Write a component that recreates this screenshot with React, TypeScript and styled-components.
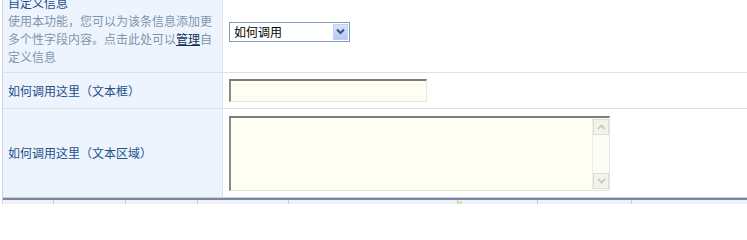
import React from 'react';
import styled, {createGlobalStyle} from "styled-components";

const GlobalStyle = createGlobalStyle`
    html, body {
        margin: 0;
        padding: 0;
        background: #ffffff;
        height: 204px;
        overflow: hidden;
    }
    body {
        font-family: "Noto Sans CJK SC", "Noto Sans", sans-serif;
        font-size: 12px;
    }
`

const footerCols = [50, 71, 71, 90, 168, 79, 93];

export default function App() {
    return (
        <>
            <GlobalStyle/>
            <Table>
                <Row height={86}>
                    <LabelCell>
                        <div>
                            <Title>自定义信息</Title>
                            <Desc>使用本功能，您可以为该条信息添加更多个性字段内容。点击此处可以<a href="#">管理</a>自定义信息</Desc>
                        </div>
                    </LabelCell>
                    <ValueCell>
                        <SelectBox>
                            <Select defaultValue="how">
                                <option value="how">如何调用</option>
                            </Select>
                            <ArrowButton>
                                <svg width="9" height="7" viewBox="0 0 9 7">
                                    <path d="M1 1.5 L4.5 5 L8 1.5" fill="none" stroke="#3d4f7a" strokeWidth="2"/>
                                </svg>
                            </ArrowButton>
                        </SelectBox>
                    </ValueCell>
                </Row>
                <Row height={36}>
                    <LabelCell>如何调用这里（文本框）</LabelCell>
                    <ValueCell>
                        <TextInput type="text"/>
                    </ValueCell>
                </Row>
                <Row height={89} last>
                    <LabelCell>如何调用这里（文本区域）</LabelCell>
                    <ValueCell>
                        <AreaBox>
                            <Area/>
                            <ScrollBar>
                                <ScrollBtn>
                                    <svg width="9" height="6" viewBox="0 0 9 6">
                                        <path d="M1 5 L4.5 1.5 L8 5" fill="none" stroke="#c4c4bc" strokeWidth="1.6"/>
                                    </svg>
                                </ScrollBtn>
                                <ScrollBtn>
                                    <svg width="9" height="6" viewBox="0 0 9 6">
                                        <path d="M1 1 L4.5 4.5 L8 1" fill="none" stroke="#c4c4bc" strokeWidth="1.6"/>
                                    </svg>
                                </ScrollBtn>
                            </ScrollBar>
                        </AreaBox>
                    </ValueCell>
                </Row>
                <Footer>
                    {footerCols.map((w, i) => (
                        <FooterCell key={i} style={{width: w}}>
                            {i === 5 && <Mark/>}
                        </FooterCell>
                    ))}
                    <FooterCell/>
                </Footer>
            </Table>
        </>
    );
}

const Table = styled.div`
    margin: -13px 0 0 2px;
    border-left: 1px solid #c9d5e4;
    display: flex;
    flex-direction: column;
`
const Row = styled.div<{height: number; last?: boolean}>`
    display: grid;
    grid-template-columns: 220px 1fr;
    height: ${p => p.height}px;
    box-sizing: border-box;
    border-bottom: 1px solid ${p => p.last ? "#c3d0e6" : "#dbe2ea"};
`
const LabelCell = styled.div`
    background: #eef4fd;
    border-right: 1px solid #d9e2ed;
    padding: 0 8px 0 5px;
    display: flex;
    align-items: center;
    color: #1d4f8a;
    line-height: 18px;
`
const Title = styled.div`
    color: #1d4f8a;
`
const Desc = styled.div`
    color: #8094ad;

    a {
        color: #13305a;
        text-decoration: underline;
    }
`
const ValueCell = styled.div`
    display: flex;
    align-items: center;
    padding-left: 6px;
    background: #ffffff;
`
const SelectBox = styled.div`
    display: flex;
    align-items: stretch;
    width: 121px;
    height: 20px;
    box-sizing: border-box;
    border: 1px solid #7f9db9;
    background: #ffffff;
    margin-top: 4px;
`
const Select = styled.select`
    appearance: none;
    flex: 1;
    min-width: 0;
    border: none;
    outline: none;
    background: transparent;
    padding: 0 0 0 4px;
    font-family: "Noto Sans CJK SC", sans-serif;
    font-size: 12px;
    color: #000000;
`
const ArrowButton = styled.span`
    width: 15px;
    margin: 1px;
    display: flex;
    align-items: center;
    justify-content: center;
    background: linear-gradient(#d6e1fb, #b6c8f3);
    border: 1px solid #c3d1f2;
    box-sizing: border-box;
`
const TextInput = styled.input`
    width: 198px;
    height: 23px;
    box-sizing: border-box;
    margin: 0;
    padding: 0 3px;
    background: #fefef3;
    border-style: solid;
    border-width: 2px 1px 1px 2px;
    border-color: #7c7c72 #e6e6dc #e6e6dc #8a8a80;
    outline: none;
`
const AreaBox = styled.div`
    display: flex;
    width: 381px;
    height: 75px;
    box-sizing: border-box;
    background: #fefef3;
    border-style: solid;
    border-width: 2px 1px 1px 2px;
    border-color: #7c7c72 #e6e6dc #e6e6dc #8a8a80;
    margin-top: 1px;
`
const Area = styled.textarea`
    flex: 1;
    border: none;
    outline: none;
    resize: none;
    background: transparent;
    overflow: hidden;
    margin: 0;
`
const ScrollBar = styled.div`
    width: 16px;
    display: flex;
    flex-direction: column;
    justify-content: space-between;
    padding: 1px 0;
    background: #fdfdf7;
    border-left: 1px solid #efefe8;
`
const ScrollBtn = styled.span`
    height: 16px;
    display: flex;
    align-items: center;
    justify-content: center;
    background: #f3f3ec;
    border: 1px solid #deded6;
    box-sizing: border-box;
`
const Footer = styled.div`
    display: flex;
    height: 6px;
    border-top: 2px solid #7d8797;
    background: #eef2f8;
`
const FooterCell = styled.div`
    flex: none;
    border-right: 1px solid #c5ccd8;
    position: relative;

    &:last-child {
        flex: 1;
        border-right: none;
    }
`
const Mark = styled.span`
    position: absolute;
    left: 0;
    top: 1px;
    width: 4px;
    height: 3px;
    background: #e8e4a0;
`
